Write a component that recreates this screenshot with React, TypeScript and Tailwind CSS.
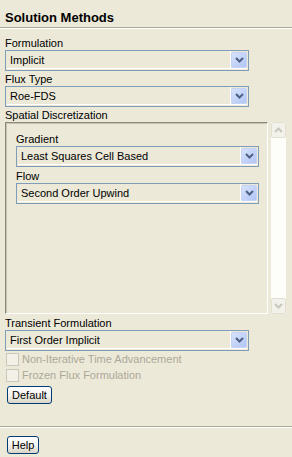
import React from "react";

const font = { fontFamily: '"Liberation Sans", Arial, sans-serif' };

function Chevron({ up = false, color }: { up?: boolean; color: string }) {
  return (
    <svg width="9" height="6" viewBox="0 0 9 6">
      <polyline
        points={up ? "1,5 4.5,1.5 8,5" : "1,1 4.5,4.5 8,1"}
        fill="none"
        stroke={color}
        strokeWidth="2"
      />
    </svg>
  );
}

function Combo({ value, className = "" }: { value: string; className?: string }) {
  return (
    <div className={`flex h-[21px] border border-[#7f9db9] bg-[#ece9d8] p-[1px] pt-0 ${className}`}>
      <div className="flex flex-1 items-center border-b border-r border-white pl-[3px] pt-[1px]">{value}</div>
      <div className="flex w-[16px] flex-col border-b border-white">
        <div className="flex flex-1 items-center justify-center rounded-[2px] border border-[#c4d3f6] bg-gradient-to-br from-[#d7e2fb] to-[#b2c6f5] mt-[1px]">
          <Chevron color="#4d6185" />
        </div>
      </div>
    </div>
  );
}

function Label({ text, className = "" }: { text: string; className?: string }) {
  return <div className={`leading-[13px] ${className}`}>{text}</div>;
}

function CheckRow({ text }: { text: string }) {
  return (
    <div className="flex h-[13px] items-center gap-[3px] pl-[1px]">
      <div className="h-[13px] w-[13px] border border-[#cac8bb] bg-[#f3f1e7]" />
      <span className="text-[#aca899]">{text}</span>
    </div>
  );
}

function XpButton({ text, className = "" }: { text: string; className?: string }) {
  return (
    <div
      className={`flex h-[18px] items-center justify-center rounded-[3px] border border-[#003c74] bg-gradient-to-b from-white via-[#f4f3ee] to-[#d9d5c8] ${className}`}
    >
      {text}
    </div>
  );
}

export default function App() {
  return (
    <div style={font} className="flex h-[457px] w-[292px] flex-col bg-[#ece9d8] text-[11px] text-black">
      <div className="h-[27px] pl-[5px] pt-[10px] text-[13px] font-bold leading-[16px]">Solution Methods</div>
      <div className="h-[2px] border-t border-b border-t-[#aca899] border-b-white" />

      <div className="flex flex-col pl-[5px]">
        <Label text="Formulation" className="mt-[8px] h-[13px]" />
        <Combo value="Implicit" className="w-[244px]" />
        <Label text="Flux Type" className="h-[15px] pt-[2px]" />
        <Combo value="Roe-FDS" className="w-[244px]" />
        <Label text="Spatial Discretization" className="h-[15px] pt-[2px]" />

        <div className="flex">
          <div className="h-[192px] w-[263px] border-t border-l border-r border-b border-t-[#8d8a7c] border-l-[#8d8a7c] border-r-white border-b-white pl-[10px] pr-[8px] shadow-[inset_1px_1px_0_#c5c2b2]">
            <Label text="Gradient" className="h-[23px] pt-[10px]" />
            <Combo value="Least Squares Cell Based" />
            <Label text="Flow" className="h-[16px] pt-[3px]" />
            <Combo value="Second Order Upwind" />
          </div>
          <div className="ml-[3px] flex h-[192px] w-[15px] flex-col justify-between bg-[#fdfdf9]">
            <div className="flex h-[16px] items-center justify-center rounded-[2px] border border-[#e2e0d3] bg-[#f2f1ea]">
              <Chevron up color="#c9c7ba" />
            </div>
            <div className="flex h-[16px] items-center justify-center rounded-[2px] border border-[#e2e0d3] bg-[#f2f1ea]">
              <Chevron color="#c9c7ba" />
            </div>
          </div>
        </div>

        <Label text="Transient Formulation" className="h-[16px] pt-[3px]" />
        <Combo value="First Order Implicit" className="w-[244px]" />
        <div className="mt-[2px] flex flex-col gap-[3px]">
          <CheckRow text="Non-Iterative Time Advancement" />
          <CheckRow text="Frozen Flux Formulation" />
        </div>
        <XpButton text="Default" className="ml-[2px] mt-[4px] w-[45px]" />
      </div>

      <div className="mt-auto h-[2px] border-t border-b border-t-[#aca899] border-b-white" />
      <div className="h-[29px] pl-[7px] pt-[8px]">
        <XpButton text="Help" className="w-[32px]" />
      </div>
    </div>
  );
}
